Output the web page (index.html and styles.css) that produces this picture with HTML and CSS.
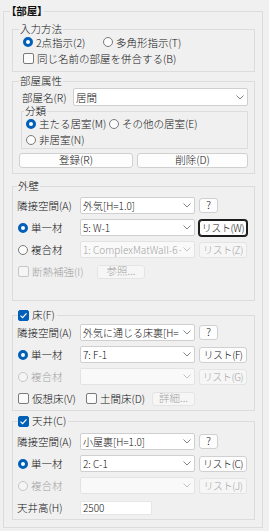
FILE: index.html
```html
<!DOCTYPE html>
<html>
<head>
    <meta charset="utf-8">
    <link rel="stylesheet" href="styles.css">
</head>
<body>
<fieldset class="panel">
    <legend class="panel-title">【部屋】</legend>

    <fieldset class="group group-input">
        <legend>入力方法</legend>
        <div class="row">
            <label class="opt w80"><span class="radio on"></span>2点指示(2)</label>
            <label class="opt"><span class="radio"></span>多角形指示(T)</label>
        </div>
        <div class="row">
            <label class="opt"><span class="check"></span>同じ名前の部屋を併合する(B)</label>
        </div>
    </fieldset>

    <fieldset class="group group-attr">
        <legend>部屋属性</legend>
        <div class="row name-row">
            <span class="name-cap">部屋名(R)</span>
            <div class="combo combo-name">
                <span class="combo-text">居間</span>
                <svg class="chev" width="8" height="5" viewBox="0 0 8 5"><path d="M0.5 0.5 L4 4 L7.5 0.5"/></svg>
            </div>
        </div>
        <fieldset class="group group-kind">
            <legend>分類</legend>
            <div class="row">
                <label class="opt w83"><span class="radio on"></span>主たる居室(M)</label>
                <label class="opt"><span class="radio"></span>その他の居室(E)</label>
            </div>
            <div class="row">
                <label class="opt"><span class="radio"></span>非居室(N)</label>
            </div>
        </fieldset>
        <div class="btn-row">
            <button class="btn">登録(R)</button>
            <button class="btn">削除(D)</button>
        </div>
    </fieldset>

    <fieldset class="group group-wall">
        <legend>外壁</legend>
        <div class="field-row">
            <span class="cap">隣接空間(A)</span>
            <div class="combo">
                <span class="combo-text">外気[H=1.0]</span>
                <svg class="chev" width="8" height="5" viewBox="0 0 8 5"><path d="M0.5 0.5 L4 4 L7.5 0.5"/></svg>
            </div>
            <button class="btn btn-help">?</button>
        </div>
        <div class="field-row">
            <label class="cap opt"><span class="radio on"></span>単一材</label>
            <div class="combo">
                <span class="combo-text">5: W-1</span>
                <svg class="chev" width="8" height="5" viewBox="0 0 8 5"><path d="M0.5 0.5 L4 4 L7.5 0.5"/></svg>
            </div>
            <button class="btn btn-list focus">リスト(W)</button>
        </div>
        <div class="field-row">
            <label class="cap opt"><span class="radio"></span>複合材</label>
            <div class="combo disabled">
                <span class="combo-text">1: ComplexMatWall-6·</span>
                <svg class="chev" width="8" height="5" viewBox="0 0 8 5"><path d="M0.5 0.5 L4 4 L7.5 0.5"/></svg>
            </div>
            <button class="btn btn-list" disabled>リスト(Z)</button>
        </div>
        <div class="field-row">
            <label class="opt disabled w80"><span class="check"></span>断熱補強(I)</label>
            <button class="btn btn-ref" disabled>参照...</button>
        </div>
    </fieldset>

    <fieldset class="group group-floor">
        <legend class="legend-check"><span class="check on"></span>床(F)</legend>
        <div class="field-row">
            <span class="cap">隣接空間(A)</span>
            <div class="combo">
                <span class="combo-text">外気に通じる床裏[H=</span>
                <svg class="chev" width="8" height="5" viewBox="0 0 8 5"><path d="M0.5 0.5 L4 4 L7.5 0.5"/></svg>
            </div>
            <button class="btn btn-help">?</button>
        </div>
        <div class="field-row">
            <label class="cap opt"><span class="radio on"></span>単一材</label>
            <div class="combo">
                <span class="combo-text">7: F-1</span>
                <svg class="chev" width="8" height="5" viewBox="0 0 8 5"><path d="M0.5 0.5 L4 4 L7.5 0.5"/></svg>
            </div>
            <button class="btn btn-list">リスト(F)</button>
        </div>
        <div class="field-row">
            <label class="cap opt disabled"><span class="radio"></span>複合材</label>
            <div class="combo disabled">
                <span class="combo-text"></span>
                <svg class="chev" width="8" height="5" viewBox="0 0 8 5"><path d="M0.5 0.5 L4 4 L7.5 0.5"/></svg>
            </div>
            <button class="btn btn-list" disabled>リスト(G)</button>
        </div>
        <div class="field-row">
            <label class="opt w69"><span class="check"></span>仮想床(V)</label>
            <label class="opt w66"><span class="check"></span>土間床(D)</label>
            <button class="btn btn-detail" disabled>詳細...</button>
        </div>
    </fieldset>

    <fieldset class="group group-ceil">
        <legend class="legend-check"><span class="check on"></span>天井(C)</legend>
        <div class="field-row">
            <span class="cap">隣接空間(A)</span>
            <div class="combo">
                <span class="combo-text">小屋裏[H=1.0]</span>
                <svg class="chev" width="8" height="5" viewBox="0 0 8 5"><path d="M0.5 0.5 L4 4 L7.5 0.5"/></svg>
            </div>
            <button class="btn btn-help">?</button>
        </div>
        <div class="field-row">
            <label class="cap opt"><span class="radio on"></span>単一材</label>
            <div class="combo">
                <span class="combo-text">2: C-1</span>
                <svg class="chev" width="8" height="5" viewBox="0 0 8 5"><path d="M0.5 0.5 L4 4 L7.5 0.5"/></svg>
            </div>
            <button class="btn btn-list">リスト(C)</button>
        </div>
        <div class="field-row">
            <label class="cap opt disabled"><span class="radio"></span>複合材</label>
            <div class="combo disabled">
                <span class="combo-text"></span>
                <svg class="chev" width="8" height="5" viewBox="0 0 8 5"><path d="M0.5 0.5 L4 4 L7.5 0.5"/></svg>
            </div>
            <button class="btn btn-list" disabled>リスト(J)</button>
        </div>
        <div class="field-row">
            <span class="cap">天井高(H)</span>
            <div class="edit">2500</div>
        </div>
    </fieldset>
</fieldset>
</body>
</html>
```

FILE: styles.css
```css
body {
    margin: 0;
    padding: 4px 6px 0 3px;
    background: #f0f0f0;
    font-family: "Noto Sans CJK JP", sans-serif;
    font-size: 10.5px;
    font-weight: 300;
    color: #111;
}

fieldset {
    margin: 0;
    padding: 0;
    min-width: 0;
    border: 1px solid #dcdcdc;
}

legend {
    margin: 0;
    padding: 0 1px;
    line-height: 14px;
}

.panel {
    padding: 0 7px 7px 8px;
}

.panel-title {
    margin-left: -2px;
    font-weight: bold;
    font-feature-settings: "palt";
}

/* groups */
.group-input {
    margin-top: 4px;
    padding: 0 0 7px 10px;
}
.group-input legend {
    margin-left: -4px;
}
.group-input .row {
    height: 12px;
}
.group-input .row + .row {
    margin-top: 4px;
}

.group-attr {
    margin-top: 2px;
    padding: 0 6px 5px 6px;
}

.group-kind {
    margin-left: 2px;
    padding: 0 0 1px 4px;
}
.group-kind legend {
    margin-left: -2px;
    line-height: 10px;
}
.group-kind .row {
    height: 15px;
}
.group-kind .row + .row {
    margin-top: 1px;
}

.group-wall {
    margin-top: 5px;
    padding: 4px 0 20px 4px;
}
.group-floor {
    margin-top: 7px;
    padding: 2px 0 3px 4px;
}
.group-ceil {
    margin-top: 3px;
    padding: 5px 0 3px 4px;
}

.legend-check {
    display: flex;
    align-items: center;
    gap: 3px;
    margin-left: 1px;
    padding: 0 2px 0 0;
}

/* rows */
.row {
    display: flex;
    align-items: center;
}

.name-row {
    height: 18px;
}
.name-cap {
    width: 51px;
    margin-left: 3px;
    flex: none;
}

.btn-row {
    display: grid;
    grid-template-columns: 114px 1fr;
    gap: 4px;
    height: 15px;
    margin-top: 4px;
}

.field-row {
    display: flex;
    align-items: center;
    height: 17px;
}
.field-row + .field-row {
    margin-top: 5px;
}

.cap {
    width: 63px;
    flex: none;
    white-space: nowrap;
}

/* options */
.opt {
    display: flex;
    align-items: center;
    gap: 3px;
    white-space: nowrap;
    flex: none;
}
.cap.opt {
    padding-left: 1px;
    width: 62px;
}
.w80 { width: 80px; }
.w83 { width: 83px; }
.w69 { width: 68px; padding-left: 1px; }
.w66 { width: 66px; }
.group-wall .w80 { width: 79px; padding-left: 1px; }

.disabled {
    color: #a3a3a3;
}

.radio {
    width: 10px;
    height: 10px;
    box-sizing: border-box;
    border: 1px solid #7a7a7a;
    border-radius: 50%;
    background: #fbfbfb;
    flex: none;
}
.radio.on {
    border: 3px solid #005fb8;
    background: #fff;
}
.disabled .radio {
    border-color: #c6c6c6;
    background: #f5f5f5;
}

.check {
    width: 11px;
    height: 11px;
    box-sizing: border-box;
    border: 1px solid #7a7a7a;
    border-radius: 2px;
    background: #fbfbfb;
    flex: none;
}
.check.on {
    border-color: #005fb8;
    background: #005fb8 url("data:image/svg+xml,%3Csvg xmlns='http://www.w3.org/2000/svg' width='9' height='9' viewBox='0 0 9 9'%3E%3Cpath d='M1.5 4.6 L3.6 6.6 L7.5 2.3' fill='none' stroke='white' stroke-width='1.2'/%3E%3C/svg%3E") center no-repeat;
}
.disabled .check {
    border-color: #c6c6c6;
    background: #f5f5f5;
}

/* controls */
.combo {
    width: 115px;
    height: 17px;
    box-sizing: border-box;
    display: flex;
    align-items: center;
    padding: 0 3px 0 2px;
    font-size: 10px;
    background: #fff;
    border: 1px solid #cfcfcf;
    border-radius: 2px;
    flex: none;
}
.combo.combo-name {
    flex: 1;
    width: auto;
    height: 18px;
    font-size: 10.5px;
}
.combo-text {
    flex: 1;
    overflow: hidden;
    white-space: nowrap;
}
.chev {
    flex: none;
    margin-left: 1px;
}
.chev path {
    fill: none;
    stroke: #858585;
    stroke-width: 1;
}
.combo.disabled {
    background: #f9f9f9;
    border-color: #e3e3e3;
}
.combo.disabled .chev path {
    stroke: #c4c4c4;
}

.btn {
    box-sizing: border-box;
    padding: 0;
    margin: 0;
    font: inherit;
    color: #111;
    background: #fdfdfd;
    border: 1px solid #d0d0d0;
    border-radius: 3px;
    white-space: nowrap;
    line-height: 1;
}
.btn:disabled {
    color: #a3a3a3;
    background: #f6f6f6;
    border-color: #e4e4e4;
}
.btn.focus {
    border-color: #1c1c1c;
    box-shadow: 0 0 0 1px #1c1c1c;
}
.btn-help {
    width: 19px;
    height: 15px;
    margin-left: 4px;
}
.btn-list {
    width: 48px;
    height: 16px;
    margin-left: 4px;
    font-size: 10px;
    letter-spacing: -0.4px;
}
.btn-ref {
    width: 48px;
    height: 14px;
}
.btn-detail {
    width: 43px;
    height: 14px;
}

.edit {
    width: 72px;
    height: 14px;
    box-sizing: border-box;
    padding-left: 2px;
    line-height: 12px;
    font-size: 10px;
    background: #fff;
    border: 1px solid #e6e6e6;
}
```
